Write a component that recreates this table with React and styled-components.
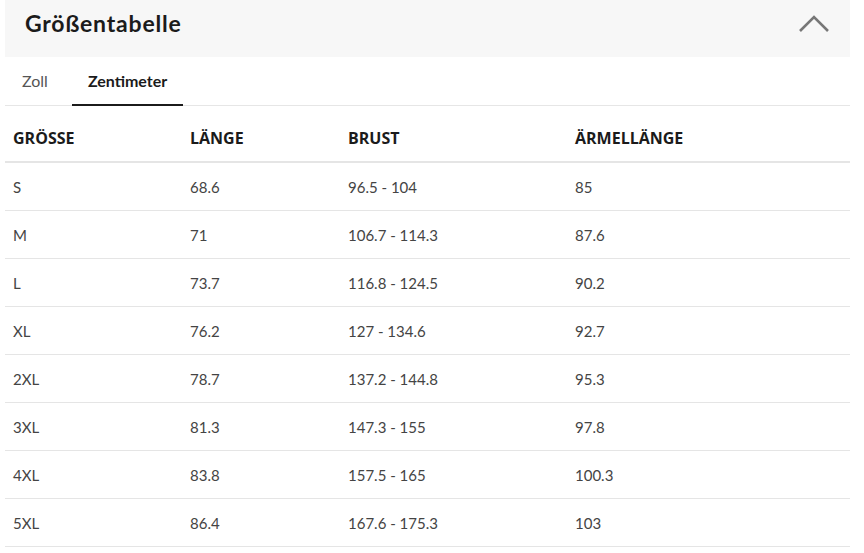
import styled, { createGlobalStyle } from 'styled-components';

const rows = [
    ['S', '68.6', '96.5 - 104', '85'],
    ['M', '71', '106.7 - 114.3', '87.6'],
    ['L', '73.7', '116.8 - 124.5', '90.2'],
    ['XL', '76.2', '127 - 134.6', '92.7'],
    ['2XL', '78.7', '137.2 - 144.8', '95.3'],
    ['3XL', '81.3', '147.3 - 155', '97.8'],
    ['4XL', '83.8', '157.5 - 165', '100.3'],
    ['5XL', '86.4', '167.6 - 175.3', '103'],
];

const App = () => {
    return (
        <>
            <GlobalStyle />
            <Wrapper>
                <Header>
                    <Title>Größentabelle</Title>
                    <svg width="34" height="22" viewBox="0 0 34 22">
                        <polyline points="2,19 16,5 30,19" fill="none" stroke="#777" strokeWidth="2.6" />
                    </svg>
                </Header>
                <Tabs>
                    <Tab>Zoll</Tab>
                    <Tab active>Zentimeter</Tab>
                </Tabs>
                <Table>
                    <colgroup>
                        <col style={{ width: '177px' }} />
                        <col style={{ width: '158px' }} />
                        <col style={{ width: '227px' }} />
                        <col />
                    </colgroup>
                    <thead>
                        <tr>
                            <Th>Größe</Th>
                            <Th>Länge</Th>
                            <Th>Brust</Th>
                            <Th>Ärmellänge</Th>
                        </tr>
                    </thead>
                    <tbody>
                        {rows.map((r) => (
                            <tr key={r[0]}>
                                {r.map((c, i) => <Td key={i}>{c}</Td>)}
                            </tr>
                        ))}
                    </tbody>
                </Table>
            </Wrapper>
        </>
    );
};

export default App;

/* CSS */
const GlobalStyle = createGlobalStyle`
    body {
        margin: 0;
        background: #fff;
    }
`;

const Wrapper = styled.div`
    width: 845px;
    margin-left: 5px;
`;

const Header = styled.div`
    height: 57px;
    box-sizing: border-box;
    background-color: #f7f7f7;
    display: flex;
    align-items: center;
    justify-content: space-between;
    padding: 0 18px 12px 20px;
`;

const Title = styled.h1`
    margin: 0;
    font-family: Lato, sans-serif;
    font-weight: 700;
    font-size: 23px;
    letter-spacing: 0.8px;
    color: #1b1b1b;
`;

const Tabs = styled.div`
    display: flex;
    gap: 8px;
    border-bottom: 1px solid #e6e6e6;
    height: 49px;
    box-sizing: border-box;
`;

const Tab = styled.div`
    font-family: Lato, sans-serif;
    font-size: 16px;
    font-weight: ${props => props.active ? 700 : 400};
    color: ${props => props.active ? '#1b1b1b' : '#555'};
    padding: 0 16px;
    margin-left: ${props => props.active ? '0' : '1px'};
    display: flex;
    align-items: center;
    margin-bottom: -1px;
    border-bottom: 2px solid ${props => props.active ? '#1b1b1b' : 'transparent'};
`;

const Table = styled.table`
    width: 100%;
    border-collapse: collapse;
    table-layout: fixed;
`;

const Th = styled.th`
    text-align: left;
    font-family: "Open Sans", sans-serif;
    font-weight: 700;
    font-size: 16px;
    text-transform: uppercase;
    color: #1b1b1b;
    height: 47px;
    padding: 8px 8px 0;
    border-bottom: 2px solid #e5e5e5;
`;

const Td = styled.td`
    font-family: Lato, sans-serif;
    font-size: 15px;
    color: #444;
    height: 47px;
    padding: 0 8px;
    border-bottom: 1px solid #e5e5e5;
`;
